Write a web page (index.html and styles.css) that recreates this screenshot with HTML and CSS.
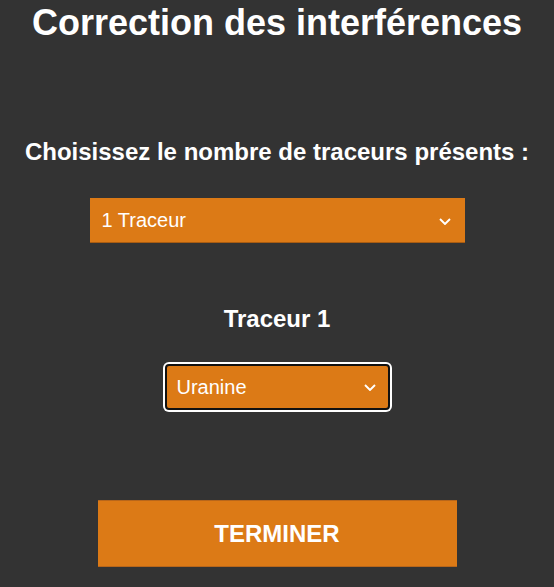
FILE: index.html
```html
<!DOCTYPE html>
<html lang="fr">
<head>
<meta charset="utf-8">
<title>Correction des interférences</title>
<link rel="stylesheet" href="styles.css">
</head>
<body>
<main class="page">
  <h1 class="title">Correction des interférences</h1>
  <p class="label">Choisissez le nombre de traceurs présents :</p>
  <div class="select-wrap select-wide">
    <select class="select">
      <option>1 Traceur</option>
      <option>2 Traceurs</option>
      <option>3 Traceurs</option>
    </select>
    <svg class="chevron" width="12" height="7" viewBox="0 0 12 7"><path d="M1 1 L6 6 L11 1" fill="none" stroke="#fff" stroke-width="1.9"/></svg>
  </div>
  <h2 class="subtitle">Traceur 1</h2>
  <div class="select-wrap select-narrow">
    <select class="select select-focus">
      <option>Uranine</option>
      <option>Sulforhodamine</option>
      <option>Naphtionate</option>
    </select>
    <svg class="chevron" width="12" height="7" viewBox="0 0 12 7"><path d="M1 1 L6 6 L11 1" fill="none" stroke="#fff" stroke-width="1.9"/></svg>
  </div>
  <button class="finish" type="button">TERMINER</button>
</main>
</body>
</html>
```

FILE: styles.css
```css
html, body {
  margin: 0;
  padding: 0;
  background: #333333;
}

.page {
  display: flex;
  flex-direction: column;
  align-items: center;
  font-family: "Liberation Sans", Arial, sans-serif;
  color: #ffffff;
  min-height: 587px;
}

.title {
  margin: 2px 0 0;
  font-size: 36px;
  font-weight: bold;
  line-height: 41px;
}

.label {
  margin: 95px 0 0;
  font-size: 24px;
  font-weight: bold;
  line-height: 28px;
}

.subtitle {
  margin: 62px 0 0;
  font-size: 24px;
  font-weight: bold;
  line-height: 28px;
}

.select-wrap {
  position: relative;
}

.select-wide {
  width: 375px;
  margin-top: 32px;
}

.select-narrow {
  width: 225px;
  margin-top: 31px;
}

.select {
  -webkit-appearance: none;
  appearance: none;
  display: block;
  width: 100%;
  height: 45px;
  margin: 0;
  padding: 0 36px 0 12px;
  border: none;
  border-bottom: 1px solid #a85c12;
  border-radius: 0;
  background: #dc7a16;
  color: #ffffff;
  font-family: "Liberation Sans", Arial, sans-serif;
  font-size: 20px;
  outline: none;
}

.select-focus {
  height: 46px;
  padding-left: 10px;
  border: 2px solid #111111;
  border-radius: 4px;
  box-shadow: 0 0 0 2px #ffffff;
}

.chevron {
  position: absolute;
  top: 50%;
  right: 14px;
  margin-top: -3px;
  pointer-events: none;
}

.finish {
  margin-top: 90px;
  width: 359px;
  height: 67px;
  border: none;
  border-top: 1px solid #b8661a;
  border-bottom: 1px solid #b8661a;
  background: #dc7a16;
  color: #ffffff;
  font-family: "Liberation Sans", Arial, sans-serif;
  font-size: 24px;
  font-weight: bold;
  padding: 0;
  cursor: pointer;
}
```
